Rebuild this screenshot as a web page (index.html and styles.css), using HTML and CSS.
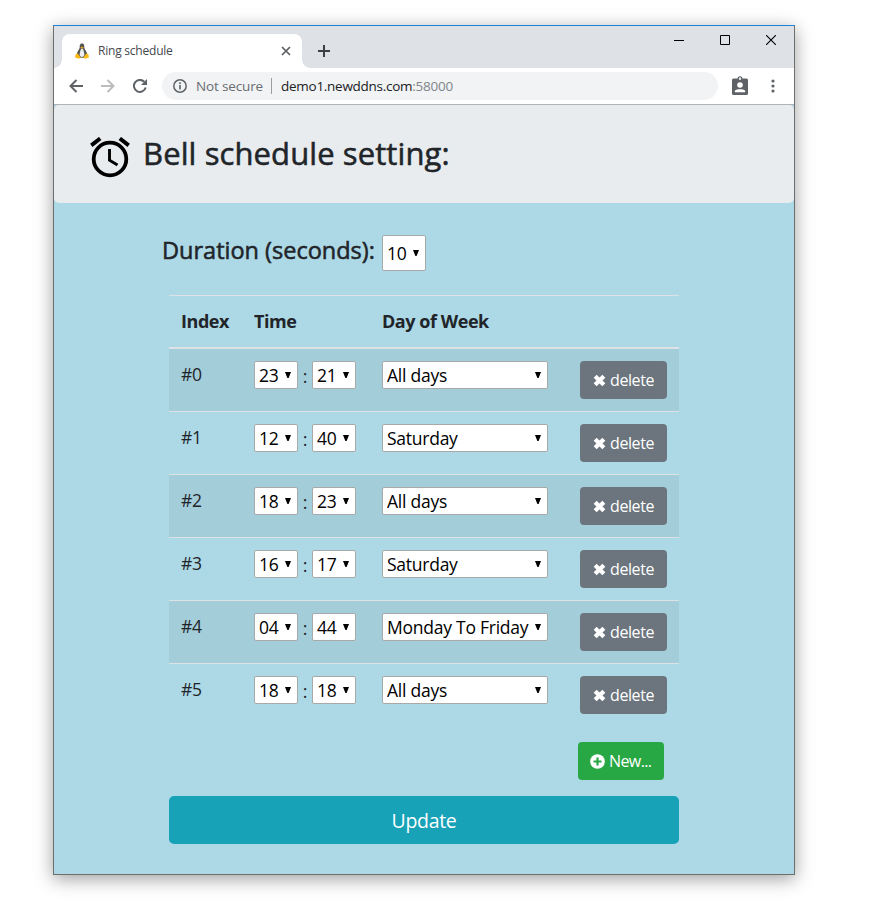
FILE: index.html
```html
<!DOCTYPE html>
<html lang="en">
<head>
<meta charset="utf-8">
<title>Ring schedule</title>
<link rel="stylesheet" href="styles.css">
</head>
<body>
<svg class="defs" width="0" height="0">
  <symbol id="times" viewBox="0 0 12 12"><path d="M2 2 10 10M10 2 2 10" stroke="currentColor" stroke-width="3.9" stroke-linecap="butt"/></symbol>
</svg>
<div class="window">
  <div class="titlebar">
    <div class="tab">
      <svg class="tux" width="16" height="16" viewBox="0 0 16 16"><path d="M8 .5C5.500.5 5.700 3 5.700 4.800 5.400 6.700 2.800 8.500 2.800 12c0 2 2.600 2.800 5.200 2.800s5.200-.8 5.200-2.800c0-3.500-2.600-5.300-2.900-7.200C10.300 3 10.500.5 8 .5z" fill="#55534f"/><path d="M8 5.200c-1.300 1-2.300 3.800-2.300 6 0 1.800 1 2.700 2.300 2.700s2.300-.9 2.300-2.700c0-2.200-1-5-2.300-6z" fill="#eee"/><path d="M6.300 4.500 8 3.600l1.700.9L8 5.800z" fill="#e9a91d"/><path d="M1 14.400l.7-3.500 2-.4 3 3.900-1.500 1.400zM15 14.400l-.7-3.500-2-.4-3 3.900 1.500 1.400z" fill="#fdb913"/></svg>
      <span class="tab-title">Ring schedule</span>
      <svg class="tab-close" width="10" height="10" viewBox="0 0 10 10"><path d="M1 1l8 8M9 1 1 9" stroke="#5a5d61" stroke-width="1.700"/></svg>
    </div>
    <svg class="plus" width="12" height="12" viewBox="0 0 12 12"><path d="M6 0v12M0 6h12" stroke="#3c4043" stroke-width="2"/></svg>
    <div class="controls">
      <svg width="10" height="10" viewBox="0 0 10 10"><path d="M0 5.500h10" stroke="#000"/></svg>
      <svg width="10" height="10" viewBox="0 0 10 10"><path d="M.5.500h9v9h-9z" stroke="#000" fill="none"/></svg>
      <svg width="10" height="10" viewBox="0 0 10 10"><path d="M0 0l10 10M10 0 0 10" stroke="#000" stroke-width="1.100"/></svg>
    </div>
  </div>
  <div class="toolbar">
    <svg width="14" height="14" viewBox="0 0 14 14"><path d="M14 7H1.500M7.500 1 1.500 7l6 6" stroke="#5f6368" stroke-width="2" fill="none"/></svg>
    <svg width="14" height="14" viewBox="0 0 14 14"><path d="M0 7h12.500M6.500 1l6 6-6 6" stroke="#bcbcbc" stroke-width="2" fill="none"/></svg>
    <svg width="14" height="14" viewBox="0 0 14 14"><path d="M12.700 8.500A6 6 0 1 1 11.300 2.800" stroke="#5f6368" stroke-width="2" fill="none"/><path d="M14 0v6H8z" fill="#5f6368"/></svg>
    <div class="address">
      <svg width="14" height="14" viewBox="0 0 14 14"><circle cx="7" cy="7" r="6.200" stroke="#5f6368" stroke-width="1.500" fill="none"/><path d="M7 6v4.500M7 3.300v1.700" stroke="#5f6368" stroke-width="1.600"/></svg>
      <span class="security">Not secure</span>
      <span class="divider"></span>
      <span class="host">demo1.newddns.com</span><span class="port">:58000</span>
    </div>
    <svg class="badge" width="16" height="19" viewBox="0 0 16 19"><circle cx="8" cy="2.700" r="1.900" stroke="#5f6368" stroke-width="1.200" fill="none"/><rect y="2.500" width="16" height="16.500" rx="1.500" fill="#5f6368"/><circle cx="8" cy="2.900" r="1" fill="#fff"/><circle cx="8" cy="9" r="2.800" fill="#fff"/><path d="M2.800 16.300v-1.200c0-2.600 10.400-2.600 10.400 0v1.200z" fill="#fff"/></svg>
    <svg class="dots" width="4" height="14" viewBox="0 0 4 14"><g fill="#5f6368"><circle cx="2" cy="2" r="1.600"/><circle cx="2" cy="7" r="1.600"/><circle cx="2" cy="12" r="1.600"/></g></svg>
  </div>
  <main class="page">
    <header class="hero">
      <svg width="40" height="41" viewBox="0 0 40 41"><circle cx="20" cy="22" r="16.300" fill="none" stroke="#000" stroke-width="3.800"/><path d="M1.300 8.300 10.200 1.500M38.700 8.300 29.800 1.500" stroke="#000" stroke-width="4"/><path d="M19.500 12v11.200l8 4.700" fill="none" stroke="#000" stroke-width="2.900"/></svg>
      <h1>Bell schedule setting:</h1>
    </header>
    <div class="duration">
      <h2>Duration (seconds):</h2>
      <span class="pick tall"><select><option>10</option></select></span>
    </div>
    <table>
      <thead><tr><th class="c-index">Index</th><th class="c-time">Time</th><th class="c-day">Day of Week</th><th></th></tr></thead>
      <tbody>
        <tr><td><span class="idx">#0</span></td><td><div class="time"><span class="pick"><select><option>23</option></select></span><span class="colon">:</span><span class="pick"><select><option>21</option></select></span></div></td><td><span class="pick day"><select><option>All days</option></select></span></td><td><button class="btn delete"><svg width="13" height="13"><use href="#times"/></svg><span>delete</span></button></td></tr>
        <tr><td><span class="idx">#1</span></td><td><div class="time"><span class="pick"><select><option>12</option></select></span><span class="colon">:</span><span class="pick"><select><option>40</option></select></span></div></td><td><span class="pick day"><select><option>Saturday</option></select></span></td><td><button class="btn delete"><svg width="13" height="13"><use href="#times"/></svg><span>delete</span></button></td></tr>
        <tr><td><span class="idx">#2</span></td><td><div class="time"><span class="pick"><select><option>18</option></select></span><span class="colon">:</span><span class="pick"><select><option>23</option></select></span></div></td><td><span class="pick day"><select><option>All days</option></select></span></td><td><button class="btn delete"><svg width="13" height="13"><use href="#times"/></svg><span>delete</span></button></td></tr>
        <tr><td><span class="idx">#3</span></td><td><div class="time"><span class="pick"><select><option>16</option></select></span><span class="colon">:</span><span class="pick"><select><option>17</option></select></span></div></td><td><span class="pick day"><select><option>Saturday</option></select></span></td><td><button class="btn delete"><svg width="13" height="13"><use href="#times"/></svg><span>delete</span></button></td></tr>
        <tr><td><span class="idx">#4</span></td><td><div class="time"><span class="pick"><select><option>04</option></select></span><span class="colon">:</span><span class="pick"><select><option>44</option></select></span></div></td><td><span class="pick day"><select><option>Monday To Friday</option></select></span></td><td><button class="btn delete"><svg width="13" height="13"><use href="#times"/></svg><span>delete</span></button></td></tr>
        <tr><td><span class="idx">#5</span></td><td><div class="time"><span class="pick"><select><option>18</option></select></span><span class="colon">:</span><span class="pick"><select><option>18</option></select></span></div></td><td><span class="pick day"><select><option>All days</option></select></span></td><td><button class="btn delete"><svg width="13" height="13"><use href="#times"/></svg><span>delete</span></button></td></tr>
      </tbody>
    </table>
    <div class="new-row"><button class="btn new"><svg width="15" height="15" viewBox="0 0 15 15"><circle cx="7.500" cy="7.500" r="7.300" fill="#fff"/><path d="M7.500 3.500v8M3.500 7.500h8" stroke="#28a745" stroke-width="2.200"/></svg><span>New...</span></button></div>
    <button class="btn update"><span>Update</span></button>
  </main>
</div>
</body>
</html>
```

FILE: styles.css
```css
* { box-sizing: border-box; }
body {
  margin: 0;
  height: 905px;
  padding: 25px 0 0 53px;
  overflow: hidden;
  background: #fff;
  color: #212529;
  font: 18px/1.5 "Open Sans", "Noto Sans", sans-serif;
}
svg { display: block; flex: none; }
.defs { position: absolute; }
.window {
  width: 742px;
  height: 850px;
  border: 1px solid #6e6e6e;
  border-top-color: #1883d7;
  box-shadow: 0 4px 17px rgba(0, 0, 0, .38);
  background: #add8e6;
}
.titlebar {
  display: flex;
  height: 42px;
  padding: 8px 18px 0 8px;
  background: #dee1e6;
}
.tab {
  position: relative;
  display: flex;
  align-items: center;
  width: 240px;
  height: 34px;
  padding: 0 11px 0 12px;
  border-radius: 8px 8px 0 0;
  background: #fff;
}
.tab::before, .tab::after {
  content: "";
  position: absolute;
  bottom: 0;
  width: 8px;
  height: 8px;
}
.tab::before { left: -8px; background: radial-gradient(circle at 0 0, #dee1e6 7.5px, #fff 8px); }
.tab::after { right: -8px; background: radial-gradient(circle at 100% 0, #dee1e6 7.5px, #fff 8px); }
.tab-title { margin-left: 8px; color: #45484c; font-size: 12px; letter-spacing: -.22px; line-height: 18px; }
.tab-close { margin-left: auto; }
.plus { margin: 11px 0 0 16px; }
.controls { display: flex; gap: 36px; margin: 1px 0 0 auto; }
.toolbar {
  display: flex;
  align-items: center;
  height: 37px;
  padding: 0 19px 0 15px;
  border-bottom: 1px solid #b3b3b3;
  background: #fff;
}
.toolbar > svg + svg { margin-left: 18px; }
.address {
  display: flex;
  align-items: center;
  width: 556px;
  height: 28px;
  margin-left: 15px;
  padding-left: 11px;
  border-radius: 14px;
  background: #f1f3f4;
  font-size: 13.5px;
}
.security { width: 67px; margin-left: 9px; color: #6a6d72; letter-spacing: -.15px; white-space: nowrap; }
.divider { width: 1px; height: 16px; margin: 0 9px 0 8px; background: #9a9da1; }
.host { color: #202124; letter-spacing: -.27px; }
.port { color: #80868b; letter-spacing: -.27px; }
.toolbar .badge { margin-left: 14px; margin-top: -2px; }
.toolbar .dots { margin-left: auto; }
.page { display: flex; flex-direction: column; }
.hero {
  display: flex;
  height: 98px;
  padding: 32px 36px;
  border-radius: 5px;
  background: #e9ecef;
}
/* A hairline stroke gives the regular face a medium weight. */
h1, h2 { margin: 0; font-weight: 400; -webkit-text-stroke: .55px #212529; white-space: nowrap; }
h1 { margin: -3px 0 0 13px; font-size: 31px; line-height: 38px; letter-spacing: .1px; }
h2 { width: 220px; font-size: 23.5px; line-height: 30px; letter-spacing: 0; }
.duration { display: flex; height: 92px; padding: 32px 0 0 108px; }
.pick { position: relative; display: block; width: 44px; height: 28px; }
.pick.tall { height: 36px; }
.pick.day { width: 166px; }
.pick::after {
  content: "";
  position: absolute;
  right: 7px;
  top: 11px;
  width: 6px;
  height: 6px;
  background: #000;
  clip-path: polygon(0 0, 100% 0, 60% 100%, 40% 100%);
}
.pick.tall::after { top: 15px; }
select {
  appearance: none;
  display: block;
  width: 100%;
  height: 100%;
  margin: 0;
  padding: 0 0 0 4px;
  border: 1px solid #a9a9a9;
  border-radius: 2px;
  background: #fff;
  color: #000;
  font: 17.500px "Open Sans", "Noto Sans", sans-serif;
  letter-spacing: -.25px;
}
table {
  width: 510px;
  margin-left: 115px;
  border-collapse: separate;
  border-spacing: 0;
  table-layout: fixed;
}
th {
  height: 54px;
  padding: 0 12px;
  border-top: 1px solid #dee2e6;
  border-bottom: 2px solid #dee2e6;
  font-size: 18px;
  font-weight: 700;
  letter-spacing: -.45px;
  text-align: left;
  white-space: nowrap;
}
.c-index { width: 73px; }
.c-time { width: 128px; }
.c-day { width: 198px; }
td { height: 63px; padding: 12px 12px; border-bottom: 1px solid #dee2e6; vertical-align: top; }
tr:last-child td { border-bottom-color: transparent; }
tbody tr:nth-child(odd) td { background: #a4cdda; }
tbody tr:last-child td, tbody tr:nth-child(even) td { background: none; }
.idx { display: block; font-size: 17.500px; line-height: 27px; letter-spacing: -.3px; }
.time { display: flex; }
.colon { width: 14px; text-align: center; line-height: 30px; }
.btn {
  display: flex;
  align-items: center;
  height: 38px;
  padding: 0 13px;
  border: 0;
  border-radius: 4px;
  color: #fff;
  font: 16px/24px "Open Sans", "Noto Sans", sans-serif;
  white-space: nowrap;
}
.delete { width: 87px; background: #6c757d; letter-spacing: -.4px; }
.delete span { margin-left: 4px; }
.delete svg { margin-top: 1px; }
.new-row { display: flex; height: 69px; padding: 15px 0 0 524px; }
.new { width: 86px; padding: 0 12px; background: #28a745; letter-spacing: -.6px; }
.new span { margin-left: 4px; }
.update {
  justify-content: center;
  width: 510px;
  height: 48px;
  margin-left: 115px;
  padding-top: 2px;
  border-radius: 5px;
  background: #17a2b8;
  font-size: 19.5px;
  letter-spacing: -.3px;
}
```
